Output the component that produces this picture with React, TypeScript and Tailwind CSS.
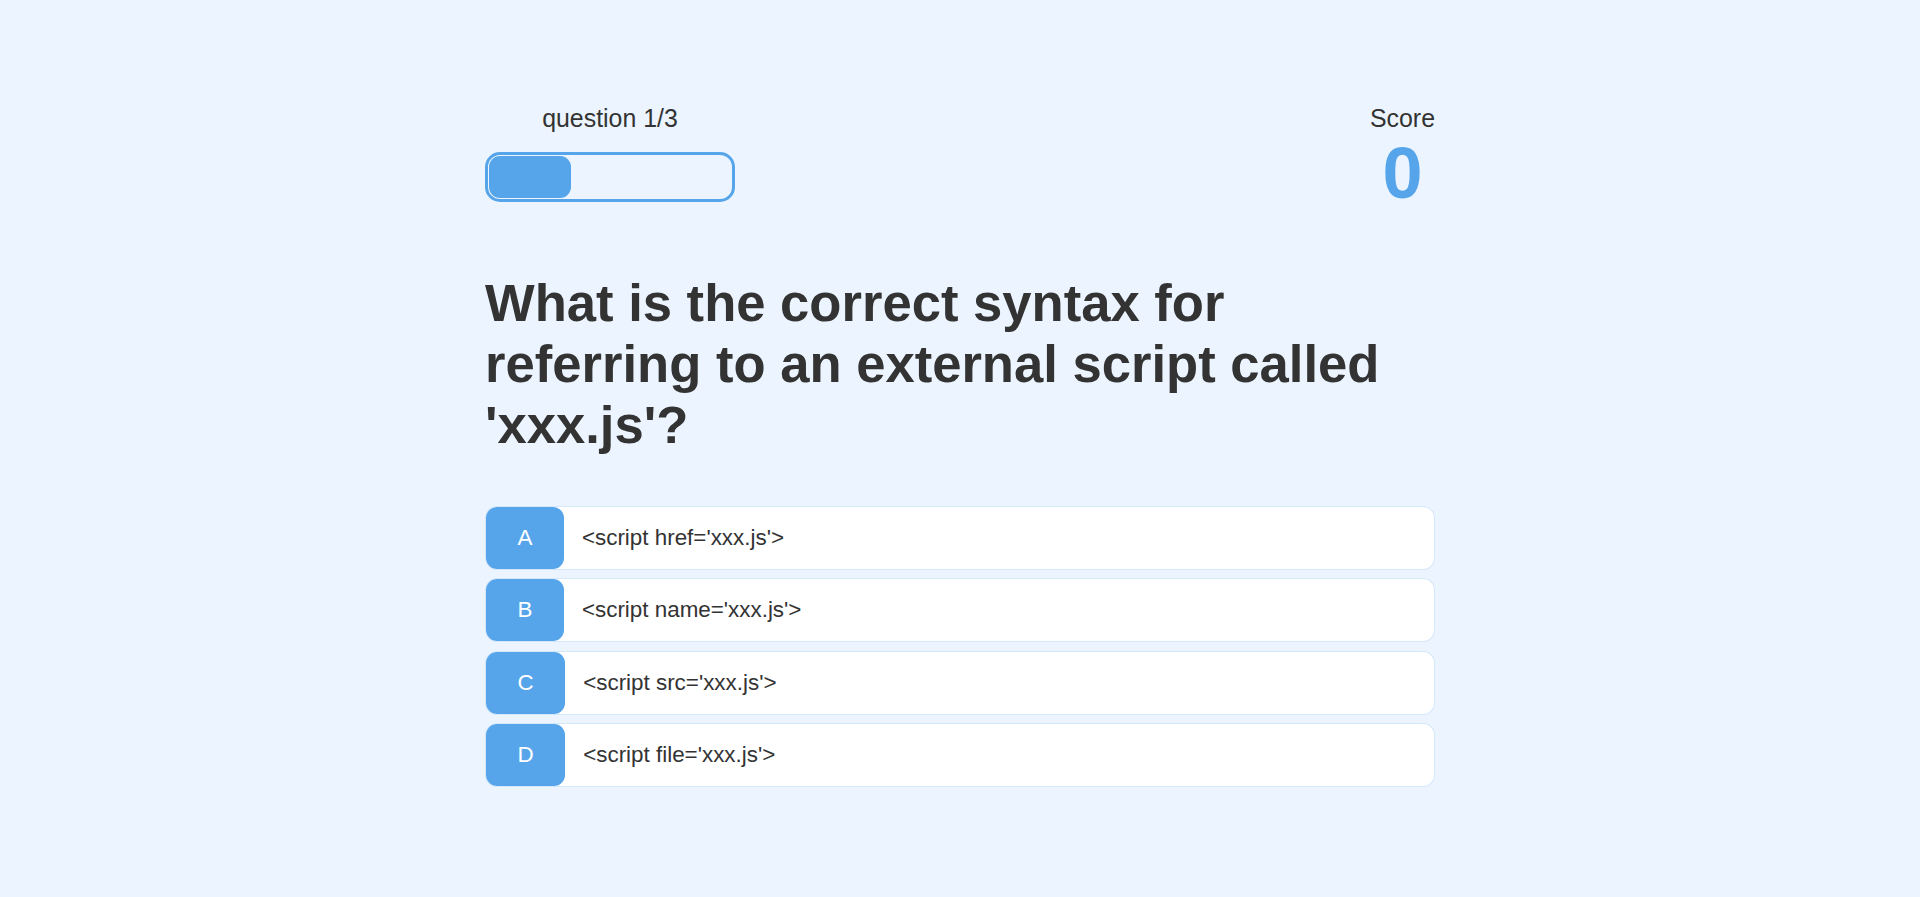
const choices = [
  { prefix: "A", text: "<script href='xxx.js'>" },
  { prefix: "B", text: "<script name='xxx.js'>" },
  { prefix: "C", text: "<script src='xxx.js'>" },
  { prefix: "D", text: "<script file='xxx.js'>" },
];

export default function App() {
  return (
    <div className="min-h-screen bg-[#ecf5ff] font-['Liberation_Sans',Arial,sans-serif] text-[#333]">
      <div className="mx-auto w-[950px] pt-[104px]">
        {/* hud */}
        <div className="flex items-start justify-between">
          <div className="flex w-[250px] flex-col items-center">
            <p className="text-[24.9px] leading-[normal]">question 1/3</p>
            <div className="mt-[19px] h-[50px] w-[250px] rounded-[15px] border-[3.7px] border-[#56a5eb] p-[1px]">
              <div className="h-full w-[34%] rounded-[11px] bg-[#56a5eb]" />
            </div>
          </div>
          <div className="flex flex-col items-center">
            <p className="text-[24.9px] leading-[normal]">Score</p>
            <p className="-mt-[1px] text-[72px] font-bold leading-[normal] text-[#56a5eb]">0</p>
          </div>
        </div>

        <h2 className="mt-[58px] text-[52.6px] font-bold leading-[normal]">
          What is the correct syntax for referring to an external script called 'xxx.js'?
        </h2>

        <div className="mt-[51px] flex flex-col gap-[8.3px]">
          {choices.map((c) => (
            <div
              key={c.prefix}
              className="flex h-[64px] cursor-pointer rounded-[12px] border border-[#56a5eb]/25 bg-white"
            >
              <div className="flex items-center rounded-[11px] bg-[#56a5eb] px-[31.5px] text-[22.4px] text-white">
                {c.prefix}
              </div>
              <div className="flex items-center pl-[18px] text-[22.4px]">{c.text}</div>
            </div>
          ))}
        </div>
      </div>
    </div>
  );
}
